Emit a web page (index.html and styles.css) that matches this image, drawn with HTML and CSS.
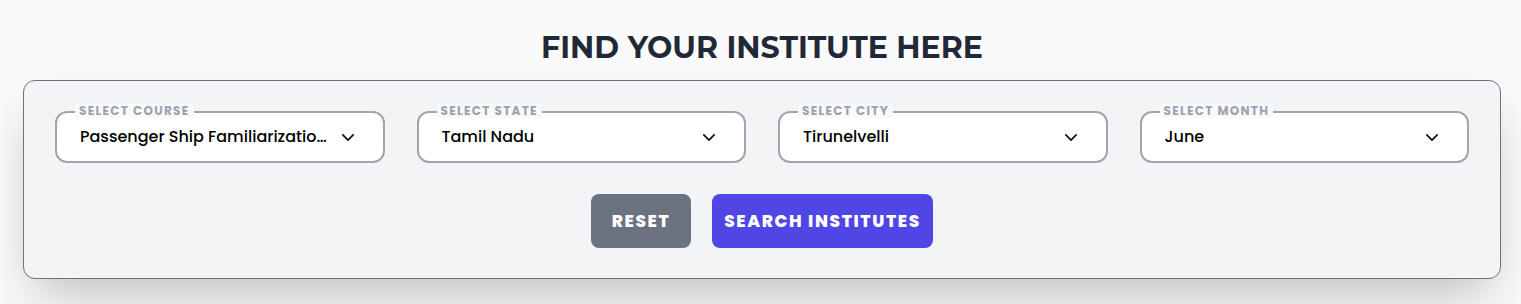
FILE: index.html
```html
<!DOCTYPE html>
<html>

<head>
    <title>Find Your Institute</title>
    <link rel="stylesheet" href="styles.css">
</head>

<body>
    <div class="finder">
        <h2 class="finder-title">FIND YOUR INSTITUTE HERE</h2>

        <div class="finder-card">
            <div class="filters">
                <div class="field">
                    <span class="field-label">SELECT COURSE</span>
                    <div class="field-box">
                        <span class="field-value">Passenger Ship Familiarization Course</span>
                        <svg class="chevron" viewBox="0 0 14 8"><path d="M1 1l6 6 6-6" /></svg>
                    </div>
                </div>
                <div class="field">
                    <span class="field-label">SELECT STATE</span>
                    <div class="field-box">
                        <span class="field-value">Tamil Nadu</span>
                        <svg class="chevron" viewBox="0 0 14 8"><path d="M1 1l6 6 6-6" /></svg>
                    </div>
                </div>
                <div class="field">
                    <span class="field-label">SELECT CITY</span>
                    <div class="field-box">
                        <span class="field-value">Tirunelvelli</span>
                        <svg class="chevron" viewBox="0 0 14 8"><path d="M1 1l6 6 6-6" /></svg>
                    </div>
                </div>
                <div class="field">
                    <span class="field-label">SELECT MONTH</span>
                    <div class="field-box">
                        <span class="field-value">June</span>
                        <svg class="chevron" viewBox="0 0 14 8"><path d="M1 1l6 6 6-6" /></svg>
                    </div>
                </div>
            </div>

            <div class="actions">
                <button class="btn btn-reset">RESET</button>
                <button class="btn btn-search">SEARCH INSTITUTES</button>
            </div>
        </div>
    </div>
</body>

</html>
```

FILE: styles.css
```css
body {
    margin: 0;
    background: #fafafa;
    font-family: 'Poppins', 'Open Sans', 'Liberation Sans', sans-serif;
    color: #111;
}

.finder {
    padding: 30px 20px 40px 23px;
}

.finder-title {
    margin: 0 0 14px;
    text-align: center;
    font-family: 'Montserrat', 'Open Sans', sans-serif;
    font-size: 30px;
    font-weight: 700;
    line-height: 36px;
    color: #1f2937;
}

.finder-card {
    background: #f3f4f6;
    border: 1px solid #6b7280;
    border-radius: 12px;
    padding: 30px 31px;
    box-shadow: 0 25px 50px -12px rgba(0, 0, 0, 0.25);
}

.filters {
    display: grid;
    grid-template-columns: repeat(4, minmax(0, 1fr));
    gap: 32px;
}

.field {
    position: relative;
}

.field-label {
    position: absolute;
    top: -7px;
    left: 20px;
    padding: 0 4px;
    background: #f8f9fa;
    font-size: 12px;
    font-weight: 700;
    letter-spacing: 1.3px;
    line-height: 14px;
    color: #9ca3af;
}

.field-box {
    display: flex;
    align-items: center;
    height: 52px;
    box-sizing: border-box;
    padding: 0 29px 0 23px;
    background: #fff;
    border: 2px solid #a1a6ae;
    border-radius: 12px;
}

.field-value {
    flex: 1;
    min-width: 0;
    white-space: nowrap;
    overflow: hidden;
    text-overflow: ellipsis;
    font-size: 16px;
    font-weight: 500;
    line-height: 26px;
    color: #000;
}

.chevron {
    width: 12px;
    height: 7px;
    margin-left: 9px;
    flex-shrink: 0;
    fill: none;
    stroke: #111;
    stroke-width: 2;
    stroke-linecap: round;
    stroke-linejoin: round;
}

.actions {
    display: flex;
    justify-content: center;
    gap: 21px;
    margin-top: 31px;
}

.btn {
    height: 54px;
    border: none;
    border-radius: 8px;
    padding: 0 4px;
    color: #fff;
    font-family: 'Poppins', 'Open Sans', 'Liberation Sans', sans-serif;
    font-size: 17px;
    font-weight: 800;
    letter-spacing: 1.6px;
    cursor: pointer;
}

.btn-reset {
    width: 100px;
    background: #6b7280;
}

.btn-search {
    width: 221px;
    background: #4f46e5;
}
```
